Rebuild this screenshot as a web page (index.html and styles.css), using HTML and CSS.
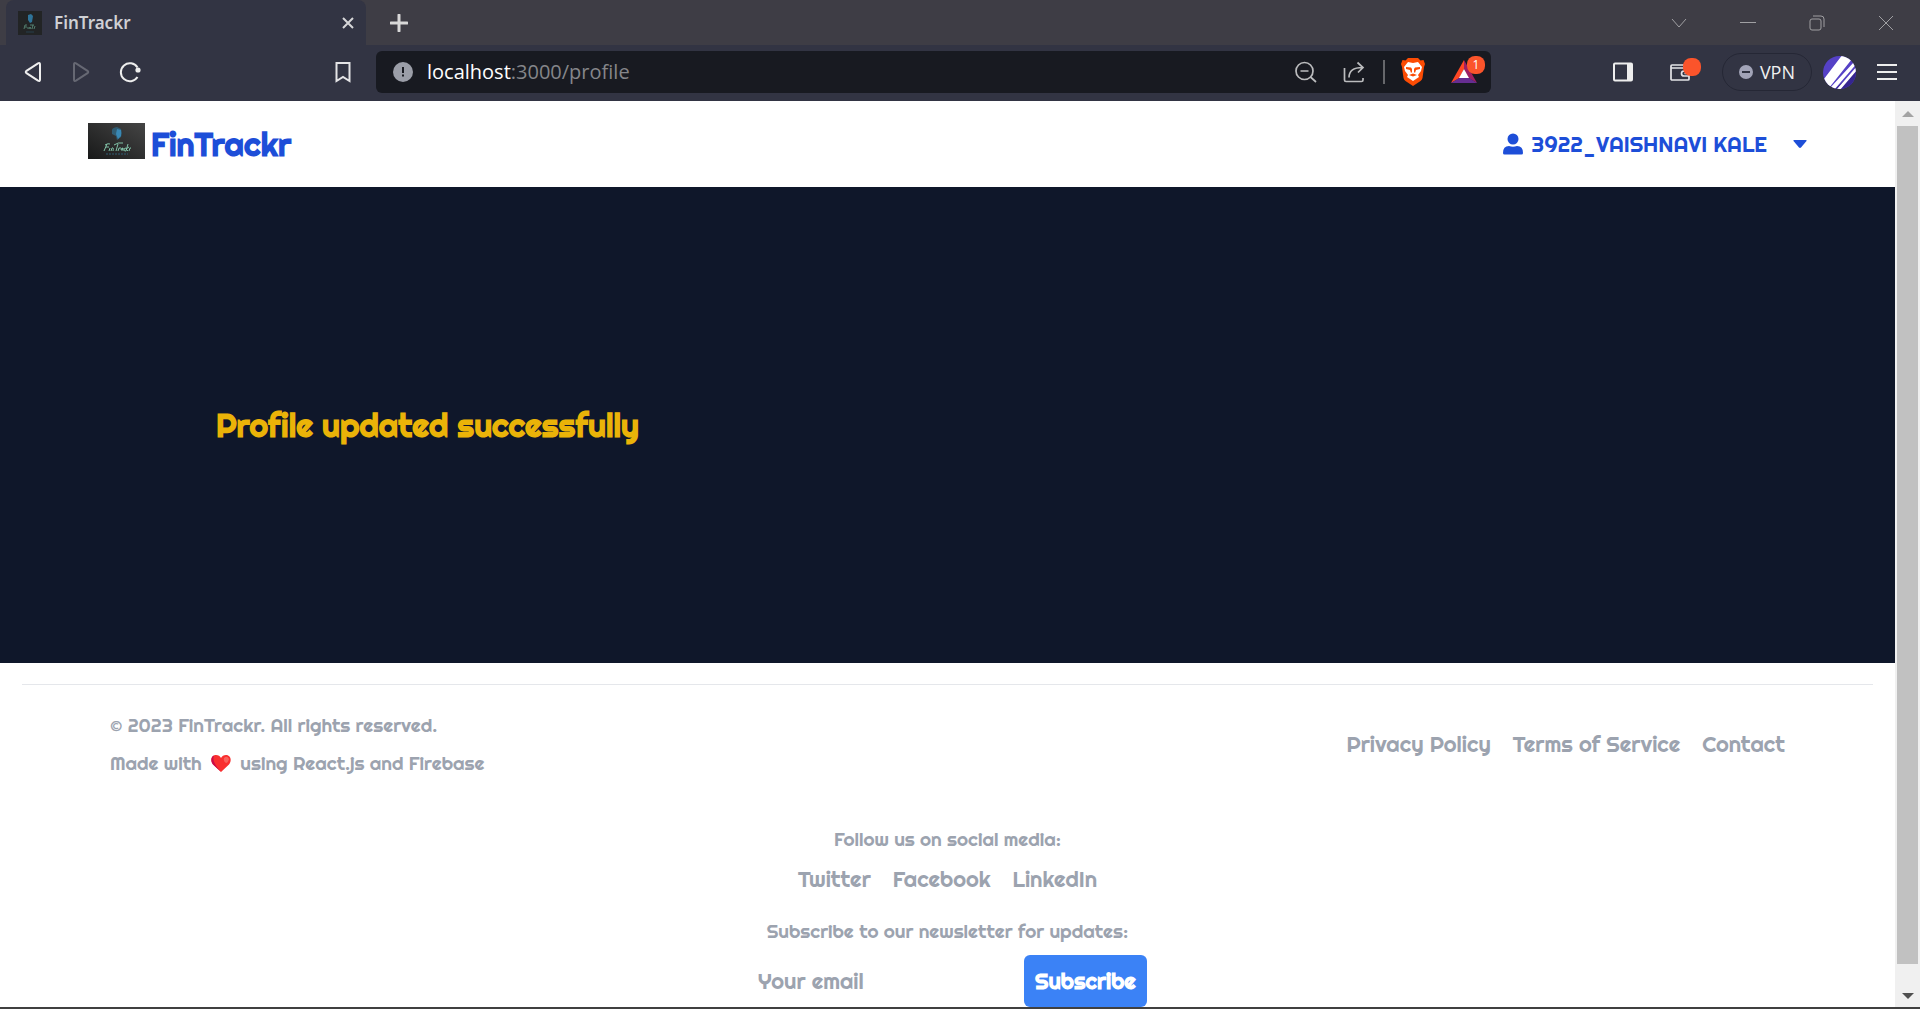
FILE: index.html
```html
<!DOCTYPE html>
<html lang="en">
  <head>
    <meta charset="UTF-8" />
    <meta name="viewport" content="width=device-width, initial-scale=1.0" />
    <title>FinTrackr</title>
    <link rel="stylesheet" href="styles.css">
  </head>
  <body>
    <div class="browser">
      <!-- Tab strip -->
      <div class="tab-bar">
        <div class="tab">
          <svg class="favicon" viewBox="0 0 24 24" aria-hidden="true">
            <rect width="24" height="24" fill="#222425" />
            <path d="M10 4l3-1 2 2-1 6-2 1-2-3z" fill="#2f7499" />
            <path d="M6 18l1-4h2M7 16h2M10 18v-2M11 18l1-2 1 2M12 14h4M14 18l1-4M16 18l1-3" stroke="#5f9480" stroke-width="0.8" fill="none" />
            <path d="M8 21h8" stroke="#2c5265" stroke-width="0.6" />
          </svg>
          <span class="tab-title">FinTrackr</span>
          <button class="icon-btn tab-close" aria-label="Close tab">
            <svg width="12" height="12" viewBox="0 0 12 12"><path d="M1 1l10 10M11 1L1 11" stroke="#d6d6d8" stroke-width="2" /></svg>
          </button>
        </div>
        <button class="icon-btn new-tab" aria-label="New tab">
          <svg width="18" height="18" viewBox="0 0 18 18"><path d="M9 1v16M1 9h16" stroke="#d8d8d8" stroke-width="3" stroke-linecap="round" /></svg>
        </button>
        <div class="window-buttons">
          <button class="icon-btn" aria-label="Search tabs">
            <svg width="16" height="16" viewBox="0 0 16 16"><path d="M1 4l7 8 7-8" /></svg>
          </button>
          <button class="icon-btn" aria-label="Minimize">
            <svg width="16" height="16" viewBox="0 0 16 16"><path d="M0 7.500h16" /></svg>
          </button>
          <button class="icon-btn" aria-label="Restore">
            <svg width="16" height="16" viewBox="0 0 16 16"><rect x="1" y="4" width="11" height="11" rx="2" /><path d="M4 1h8q3 0 3 3v8" /></svg>
          </button>
          <button class="icon-btn" aria-label="Close window">
            <svg width="16" height="16" viewBox="0 0 16 16"><path d="M1 1l14 14M15 1L1 15" /></svg>
          </button>
        </div>
      </div>

      <!-- Toolbar -->
      <div class="toolbar">
        <div class="nav-buttons">
          <button class="icon-btn" aria-label="Back">
            <svg width="20" height="22" viewBox="0 0 20 22"><path d="M15 2.300Q17 1.300 17 3.500v15q0 2.200-2 1.200L3.500 12.200Q2 11 3.500 9.800z" fill="none" stroke="#eeeeee" stroke-width="2" /></svg>
          </button>
          <button class="icon-btn" aria-label="Forward" disabled>
            <svg width="20" height="22" viewBox="0 0 20 22"><path d="M5 2.300Q3 1.300 3 3.500v15q0 2.200 2 1.200l11.500-7.500q1.500-1.200 0-2.400z" fill="none" stroke="#666873" stroke-width="2" /></svg>
          </button>
          <button class="icon-btn" aria-label="Reload">
            <svg width="22" height="22" viewBox="0 0 22 22"><path d="M18.500 16A9 9 0 1 1 18.500 6.500" fill="none" stroke="#eeeeee" stroke-width="2" /><circle cx="19" cy="9" r="2.600" fill="#eeeeee" /></svg>
          </button>
        </div>
        <button class="icon-btn bookmark" aria-label="Bookmark this page">
          <svg width="16" height="22" viewBox="0 0 16 22"><path d="M1.500 2h13v18l-6.500-4-6.500 4z" fill="none" stroke="#e4e4e6" stroke-width="2" /></svg>
        </button>
        <div class="address-bar">
          <button class="icon-btn" aria-label="Site information">
            <svg width="20" height="20" viewBox="0 0 20 20"><circle cx="10" cy="10" r="10" fill="#9b9ea8" /><path d="M10 5v6M10 12.500v2" stroke="#181a21" stroke-width="2" /></svg>
          </button>
          <span class="url"><b>localhost</b>:3000/profile</span>
          <div class="address-icons">
            <button class="icon-btn" aria-label="Zoom">
              <svg width="22" height="22" viewBox="0 0 22 22"><g fill="none" stroke="#bbbcbe" stroke-width="1.700"><circle cx="9.500" cy="10" r="8.500" /><path d="M5.500 10h8M15.500 16l5.500 5" /></g></svg>
            </button>
            <button class="icon-btn" aria-label="Share">
              <svg width="22" height="22" viewBox="0 0 22 22"><g fill="none" stroke="#bbbcbe" stroke-width="1.700"><path d="M1.500 7v12q0 1.500 1.500 1.500h15.500q1.500 0 1.500-1.500v-2" /><path d="M6 16.500C6 10 10 6.500 19.500 6.500M14.500 1.500l5.500 5-5 5" /></g></svg>
            </button>
            <span class="divider"></span>
            <button class="icon-btn" aria-label="Brave Shields">
              <svg width="24" height="28" viewBox="0 0 24 28">
                <path d="M7 0h10l2.500 2.500 3-.5 1.500 4-1 3-1.500 11q-.5 2-2 3L12 28l-7.500-5q-1.500-1-2-3L1 9 0 6l1.500-4 3 .5z" fill="#fc4c04" />
                <path d="M7 4l5 1 5-1 4 5-1 4-3 4 1 2-6 4-6-4 1-2-3-4-1-4z" fill="#ffffff" />
                <path d="M5 9l5 .5 1 1.500v3l-1 1-1-3-4-1zM19 9l-5 .5-1 1.500v3l1 1 1-3 4-1zM8 17l4-1.500 4 1.500-4 1.500z" fill="#fc4c04" />
              </svg>
            </button>
            <button class="icon-btn rewards" aria-label="Brave Rewards">
              <svg width="26" height="24" viewBox="0 0 26 24"><path d="M13 0L0 23l8.500-5L13 9z" fill="#ff4724" /><path d="M13 0l13 23-8.500-5L13 9z" fill="#9e1f63" /><path d="M0 23h26l-8-5H8z" fill="#662d91" /><path d="M13 9l5 9H8z" fill="#ffffff" /></svg>
              <span class="badge">1</span>
            </button>
          </div>
        </div>
        <div class="toolbar-right">
          <button class="icon-btn" aria-label="Sidebar">
            <svg width="20" height="20" viewBox="0 0 20 20"><rect x="1" y="1.500" width="18" height="17" rx="1" fill="none" stroke="#eeeeee" stroke-width="2" /><path d="M14 1h5v18h-5z" fill="#eeeeee" /></svg>
          </button>
          <button class="icon-btn wallet" aria-label="Wallet">
            <svg width="20" height="20" viewBox="0 0 20 20"><g fill="none" stroke="#e4e4e8" stroke-width="1.700"><rect x="1" y="3" width="18" height="15" rx="1" /><path d="M1 6h18M19 9h-5q-2.500 0-2.500 2.500T14 14h5M14.500 11.500h2" /></g></svg>
            <span class="badge"></span>
          </button>
          <button class="vpn">
            <svg width="14" height="14" viewBox="0 0 14 14"><circle cx="7" cy="7" r="7" fill="#a2a4b8" /><path d="M3 7h8" stroke="#303342" stroke-width="2" /></svg>
            VPN
          </button>
          <button class="icon-btn profile" aria-label="Profile">
            <svg width="33" height="33" viewBox="0 0 33 33">
              <defs><clipPath id="avatar"><circle cx="16.500" cy="16.500" r="16.500" /></clipPath></defs>
              <g clip-path="url(#avatar)"><rect width="33" height="33" fill="#5541c6" /><path d="M33 14v19H12z" fill="#35258f" /><path d="M-2 27L20-2l9 5L6 32zM7 32L31 6l1.500 3L11 34zM14 33L34 10v4L17 34z" fill="#ffffff" /></g>
            </svg>
          </button>
          <button class="icon-btn" aria-label="Menu">
            <svg width="20" height="16" viewBox="0 0 20 16"><path d="M0 1h20M0 8h20M0 15h20" stroke="#eeeeee" stroke-width="2" /></svg>
          </button>
        </div>
      </div>

      <div class="viewport">
        <div class="page">
          <header class="header">
            <a href="/" class="brand">
              <svg class="logo" viewBox="0 0 57 36" aria-hidden="true">
                <defs><linearGradient id="shade" x1="0" x2="1" y1="1" y2="0"><stop stop-color="#181919" /><stop offset="1" stop-color="#454545" /></linearGradient></defs>
                <rect width="57" height="36" fill="url(#shade)" />
                <path d="M24 7q0-2 5-3l4 2 1 4-1 4-4 3-1-4-4-2z" fill="#315d73" />
                <path d="M29 6l4 1v6l-3 3-2-5z" fill="#3988b4" />
                <g fill="none" stroke="#8bd4b5" stroke-width="0.900">
                  <path d="M16 28l3-7M17 22q3-2 5-1M18 24h3M21 28l1-3M23 28l1-3q2-1 1 3" />
                  <path d="M28 28l2-7M26 22q4-3 9-2M30 28l1-3h2M35 25q-2 0-2 2 1 1 2-2v3M38 25q-2 0-2 2 0 1 2 1M40 21l-2 7M38 26l3-2M38 26l2 2M41 28l1-3h1" />
                </g>
                <path d="M18 31h22" stroke="#315d73" stroke-dasharray="2 1" />
              </svg>
              <span class="brand-name">FinTrackr</span>
            </a>
            <button class="user-menu">
              <svg width="20" height="22" viewBox="0 0 20 22"><circle cx="10" cy="6" r="5.500" fill="#1d4ed8" /><path d="M0 20q0-7 6-7 4 1.500 8 0 6 0 6 7 0 1.500-1.500 1.500h-17Q0 21.500 0 20z" fill="#1d4ed8" /></svg>
              <span>3922_VAISHNAVI KALE</span>
              <svg class="caret" width="14" height="8" viewBox="0 0 14 8"><path d="M1 0h12q1 0 .5 1L8 7.500q-1 .8-2 0L.5 1Q0 0 1 0z" fill="#1d4ed8" /></svg>
            </button>
          </header>

          <main class="hero">
            <h1>Profile updated successfully</h1>
          </main>

          <footer class="footer">
            <hr>
            <div class="footer-top">
              <div class="footer-copy">
                <p>© 2023 FinTrackr. All rights reserved.</p>
                <p>Made with
                  <svg class="heart" width="20" height="17" viewBox="0 0 20 17" role="img" aria-label="love"><path d="M10 17L2 9.500C-1 6 0 0 5 0q3.500 0 5 3 1.500-3 5-3c5 0 6 6 3 9.500z" fill="#f92f2f" /><path d="M10 17L2 9.500C-1 6 .5 1 3 .5 1 5 4 10 10 17z" fill="#ca0b4a" /><path d="M13 3q3-3 5 1-1 4-3 4-3-2-2-5z" fill="#f9625c" /></svg>
                  using React.js and Firebase</p>
              </div>
              <nav class="links">
                <a href="#">Privacy Policy</a>
                <a href="#">Terms of Service</a>
                <a href="#">Contact</a>
              </nav>
            </div>
            <div class="social">
              <p>Follow us on social media:</p>
              <nav class="links">
                <a href="#">Twitter</a>
                <a href="#">Facebook</a>
                <a href="#">LinkedIn</a>
              </nav>
            </div>
            <form class="newsletter">
              <label for="email">Subscribe to our newsletter for updates:</label>
              <div class="newsletter-row">
                <input type="email" id="email" name="email" placeholder="Your email" />
                <button type="button">Subscribe</button>
              </div>
            </form>
          </footer>
        </div>

        <div class="scrollbar">
          <svg width="12" height="6" viewBox="0 0 12 6"><path d="M0 6l6-6 6 6z" fill="#a3a3a3" /></svg>
          <div class="thumb"></div>
          <svg width="12" height="6" viewBox="0 0 12 6"><path d="M0 0h12L6 6z" fill="#505050" /></svg>
        </div>
      </div>
    </div>
  </body>
</html>
```

FILE: styles.css
```css
* {
  box-sizing: border-box;
}

body {
  margin: 0;
  font-family: Righteous, Lato, sans-serif;
}

button {
  font-family: inherit;
  cursor: pointer;
}

svg {
  display: block;
  flex-shrink: 0;
}

a {
  color: inherit;
  text-decoration: none;
}

p {
  margin: 0;
}

.browser {
  display: flex;
  flex-direction: column;
  height: 100vh;
  overflow: hidden;
  border-bottom: 2px solid #404040;
}

.icon-btn {
  display: flex;
  align-items: center;
  justify-content: center;
  border: none;
  padding: 0;
  background: none;
}

/* Tab strip */
.tab-bar {
  display: flex;
  align-items: center;
  height: 45px;
  flex-shrink: 0;
  padding-left: 6px;
  background-color: #3e3d45;
}

.tab {
  display: flex;
  align-items: center;
  width: 360px;
  height: 100%;
  padding: 0 12px;
  border-radius: 8px 8px 0 0;
  background-color: #323443;
}

.favicon {
  width: 24px;
  height: 24px;
}

.tab-title {
  margin-left: 12px;
  font: 600 17px/24px "Noto Sans", sans-serif;
  color: #cfd0d4;
}

.tab-close {
  margin-left: auto;
}

.new-tab {
  margin-left: 24px;
}

.window-buttons {
  display: flex;
  margin-left: auto;
}

.window-buttons .icon-btn {
  width: 69px;
  height: 44px;
}

.window-buttons svg {
  fill: none;
  stroke: #a0a0a3;
}

/* Toolbar */
.toolbar {
  display: flex;
  align-items: center;
  height: 56px;
  flex-shrink: 0;
  padding: 0 23px 2px;
  background-color: #323443;
}

.nav-buttons {
  display: flex;
  gap: 28px;
}

.bookmark {
  margin-left: 194px;
}

.address-bar {
  display: flex;
  align-items: center;
  flex: 1;
  height: 42px;
  margin-left: 25px;
  padding: 0 6px 0 17px;
  border-radius: 6px;
  background-color: #181a21;
}

.url {
  margin-left: 14px;
  font: 20px/24px "Open Sans", sans-serif;
  color: #85868a;
}

.url b {
  font-weight: normal;
  color: #ffffff;
}

.address-icons {
  display: flex;
  align-items: center;
  gap: 26px;
  margin-left: auto;
}

.divider {
  width: 2px;
  height: 24px;
  margin: 0 -10px 0 -8px;
  background-color: #66676b;
}

.rewards {
  position: relative;
  padding-right: 8px;
}

.badge {
  position: absolute;
  top: -4px;
  right: 0;
  width: 18px;
  height: 18px;
  border-radius: 8px;
  background-color: #fb542b;
  color: #ffffff;
  font: 12px/18px "Open Sans", sans-serif;
}

.toolbar-right {
  display: flex;
  align-items: center;
  margin-left: 122px;
}

.wallet {
  position: relative;
  margin-left: 26px;
  padding: 0 11px;
}

.vpn {
  display: flex;
  align-items: center;
  gap: 7px;
  height: 38px;
  margin-left: 21px;
  padding: 0 16px;
  border: 1px solid #252735;
  border-radius: 20px;
  background: none;
  font: 18px/24px "Open Sans", sans-serif;
  color: #f0f0f0;
}

.profile {
  margin: 0 21px 0 11px;
}

/* Page content */
.viewport {
  display: flex;
  flex: 1;
  min-height: 0;
}

.page {
  flex: 1;
  overflow: hidden;
  background-color: #ffffff;
}

.header {
  display: flex;
  align-items: center;
  justify-content: space-between;
  height: 86px;
  padding: 0 88px;
  color: #1d4ed8;
}

.brand {
  display: flex;
  align-items: center;
  gap: 6px;
}

.logo {
  width: 57px;
  height: 36px;
  margin-bottom: 6px;
}

.brand-name {
  font-size: 32px;
  font-weight: bold;
}

.user-menu {
  display: flex;
  align-items: center;
  gap: 8px;
  padding: 0;
  border: none;
  background: none;
  color: #1d4ed8;
  font-size: 22px;
}

.caret {
  margin-left: 18px;
}

.hero {
  padding: 216px;
  background-color: #0f172a;
}

.hero h1 {
  margin: 0;
  font-size: 32px;
  line-height: 44px;
  color: #eab308;
}

.footer {
  padding: 21px 22px;
  color: #9ca3af;
  font-size: 19px;
  line-height: 32px;
}

.footer hr {
  margin: 0;
  border: none;
  border-top: 1px solid #e5e7eb;
}

.footer-top {
  display: flex;
  align-items: center;
  justify-content: space-between;
  padding: 24px 88px;
}

.footer-copy {
  display: flex;
  flex-direction: column;
  gap: 6px;
}

.heart {
  display: inline-block;
  margin: 0 4px;
  vertical-align: -2px;
}

.links {
  display: flex;
  gap: 22px;
  font-size: 22px;
}

.social,
.newsletter {
  display: flex;
  flex-direction: column;
  align-items: center;
  gap: 8px;
}

.social {
  padding-top: 20px;
}

.newsletter {
  padding-top: 20px;
}

.newsletter-row {
  display: flex;
}

.newsletter input {
  width: 276px;
  padding: 10px;
  border: none;
  outline: none;
  background: none;
  font: 22px/32px Righteous, Lato, sans-serif;
}

.newsletter input::placeholder {
  color: #9ca3af;
}

.newsletter button {
  height: 52px;
  padding: 0 11px;
  border: none;
  border-radius: 6px;
  background-color: #3b82f6;
  color: #ffffff;
  font-size: 22px;
  font-weight: bold;
}

/* Scrollbar */
.scrollbar {
  display: flex;
  flex-direction: column;
  align-items: center;
  width: 25px;
  padding: 10px 2px 8px;
  background-color: #f0f0f0;
}

.thumb {
  flex: 1;
  width: 100%;
  margin: 9px 0 29px;
  background-color: #c1c1c1;
}
```
